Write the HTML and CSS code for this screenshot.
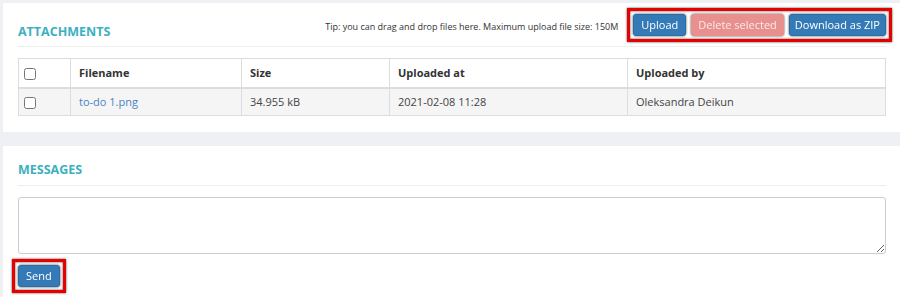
FILE: index.html
```html
<!DOCTYPE html>
<html lang="en">
<head>
    <meta charset="UTF-8">
    <title>Task attachments</title>
    <link rel="stylesheet" href="styles.css">
</head>
<body>
    <div class="panel">
        <div class="panel-head">
            <h2>Attachments</h2>
            <span class="tip">Tip: you can drag and drop files here. Maximum upload file size: 150M</span>
            <div class="btn-group highlight">
                <button class="btn btn-primary">Upload</button>
                <button class="btn btn-danger" disabled>Delete selected</button>
                <button class="btn btn-primary btn-zip">Download as ZIP</button>
            </div>
        </div>

        <table class="files">
            <thead>
                <tr>
                    <th class="check-col"><input type="checkbox"></th>
                    <th class="name-col">Filename</th>
                    <th class="size-col">Size</th>
                    <th class="date-col">Uploaded at</th>
                    <th>Uploaded by</th>
                </tr>
            </thead>
            <tbody>
                <tr>
                    <td class="check-col"><input type="checkbox"></td>
                    <td><a href="#">to-do 1.png</a></td>
                    <td>34.955 kB</td>
                    <td>2021-02-08 11:28</td>
                    <td>Oleksandra Deikun</td>
                </tr>
            </tbody>
        </table>
    </div>

    <div class="panel panel-messages">
        <div class="panel-head">
            <h2>Messages</h2>
        </div>
        <textarea class="message-box"></textarea>
        <div class="send-row">
            <div class="highlight">
                <button class="btn btn-primary">Send</button>
            </div>
        </div>
    </div>
</body>
</html>
```

FILE: styles.css
```css
/* Page */
body {
    margin: 0;
    padding: 3px 0 0 3px;
    background-color: #eef0f4;
    font-family: 'Open Sans', sans-serif;
    color: #333;
    font-size: 11px;
}

/* Panels */
.panel {
    background-color: #ffffff;
    padding: 0 14px 16px 15px;
}

.panel-messages {
    margin-top: 14px;
    padding-bottom: 20px;
}

.panel-head {
    display: flex;
    align-items: center;
    height: 42px;
    padding-top: 1px;
    border-bottom: 1px solid #eeeeee;
    margin-bottom: 11px;
}

.panel-messages .panel-head {
    height: 38px;
    margin-bottom: 11px;
}

h2 {
    margin: 12px 0 0;
    color: #3bb0c1;
    font-size: 12.5px;
    font-weight: 700;
    text-transform: uppercase;
    flex: 1;
}

.panel-messages h2 {
    margin-top: 7px;
}

.tip {
    font-size: 9px;
    color: #333;
    margin-right: 15px;
    margin-top: 2px;
}

/* Buttons */
.btn-group {
    display: flex;
    gap: 5px;
}

.btn {
    font-family: 'Open Sans', sans-serif;
    font-size: 11px;
    color: #ffffff;
    border: 1px solid transparent;
    border-radius: 3px;
    padding: 1px 7px 2px;
    height: 22px;
    cursor: pointer;
}

.btn-zip {
    padding: 1px 5px 2px;
}

.btn-primary {
    background-color: #337ab7;
    border-color: #2e6da4;
}

.btn-danger {
    background-color: #e8908e;
    border-color: #e8908e;
    color: #fbe9e9;
    padding: 1px 6px 2px;
}

/* Screenshot annotation */
.highlight {
    display: inline-flex;
    outline: 3px solid #e60000;
    outline-offset: 3px;
    filter: drop-shadow(0 0 1px rgba(0, 0, 0, 0.7));
}

/* Files table */
.files {
    width: 100%;
    border-collapse: collapse;
    table-layout: fixed;
}

.files th,
.files td {
    box-sizing: border-box;
    border: 1px solid #dddddd;
    text-align: left;
    padding: 0 8px;
    height: 28px;
}

.files th {
    font-weight: 700;
    border-bottom-width: 2px;
    height: 29px;
}

.files td {
    background-color: #f5f5f5;
    color: #444;
}

.files a {
    color: #4a84c4;
    text-decoration: none;
}

.check-col {
    width: 52px;
}

.files .check-col {
    padding: 0 0 0 5px;
}

.files input[type="checkbox"] {
    margin: 0;
    width: 12px;
    height: 12px;
    vertical-align: middle;
}

.name-col {
    width: 171px;
}

.size-col {
    width: 148px;
}

.date-col {
    width: 238px;
}

/* Messages */
.message-box {
    display: block;
    box-sizing: border-box;
    width: 100%;
    height: 57px;
    border: 1px solid #cccccc;
    border-radius: 3px;
    resize: vertical;
}

.send-row {
    margin-top: 11px;
}

.send-row .btn {
    padding: 1px 7px 2px;
}
```
